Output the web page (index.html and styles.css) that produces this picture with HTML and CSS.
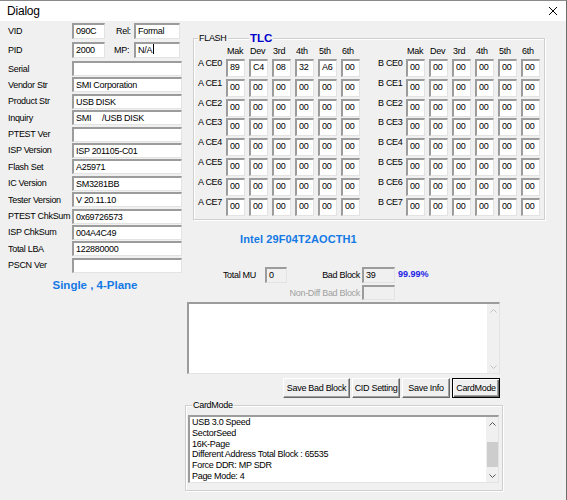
FILE: index.html
```html
<!DOCTYPE html>
<html>
<head>
<meta charset="utf-8">
<title>Dialog</title>
<link rel="stylesheet" href="styles.css">
</head>
<body>
<div class="window">
  <div class="titlebar">
    <span class="title">Dialog</span>
    <svg class="close" width="10" height="10" viewBox="0 0 10 10"><path d="M1 1L9 9M9 1L1 9" stroke="#000" stroke-width="1" fill="none"/></svg>
  </div>
  <div class="client">
    <div class="leftcol">
      <div class="idrow">
        <span class="lbl">VID</span><span class="edit short">090C</span><span class="lbl2 rel">Rel:</span><span class="edit med">Formal</span>
      </div>
      <div class="idrow">
        <span class="lbl">PID</span><span class="edit short">2000</span><span class="lbl2 mp">MP:</span><span class="edit med">N/A<span class="caret"></span></span>
      </div>
      <div class="infogrid">
        <span class="lbl">Serial</span><span class="edit"></span>
        <span class="lbl">Vendor Str</span><span class="edit">SMI Corporation</span>
        <span class="lbl">Product Str</span><span class="edit">USB DISK</span>
        <span class="lbl">Inquiry</span><span class="edit">SMI&nbsp;&nbsp;&nbsp;&nbsp;&nbsp;/USB DISK</span>
        <span class="lbl">PTEST Ver</span><span class="edit"></span>
        <span class="lbl">ISP Version</span><span class="edit">ISP 201105-C01</span>
        <span class="lbl">Flash Set</span><span class="edit">A25971</span>
        <span class="lbl">IC Version</span><span class="edit">SM3281BB</span>
        <span class="lbl">Tester Version</span><span class="edit">V 20.11.10</span>
        <span class="lbl">PTEST ChkSum</span><span class="edit">0x69726573</span>
        <span class="lbl">ISP ChkSum</span><span class="edit">004A4C49</span>
        <span class="lbl">Total LBA</span><span class="edit">122880000</span>
        <span class="lbl">PSCN Ver</span><span class="edit"></span>
      </div>
      <div class="plane">Single , 4-Plane</div>
    </div>

    <div class="rightcol">
      <div class="group flash">
        <span class="legend flashlbl">FLASH</span><span class="legend tlc">TLC</span>
        <div class="halves">
          <div class="cegrid a">
            <span></span><span class="hdr">Mak</span><span class="hdr">Dev</span><span class="hdr">3rd</span><span class="hdr">4th</span><span class="hdr">5th</span><span class="hdr">6th</span>
            <span class="celbl">A CE0</span><span class="cell">89</span><span class="cell">C4</span><span class="cell">08</span><span class="cell">32</span><span class="cell">A6</span><span class="cell">00</span>
            <span class="celbl">A CE1</span><span class="cell">00</span><span class="cell">00</span><span class="cell">00</span><span class="cell">00</span><span class="cell">00</span><span class="cell">00</span>
            <span class="celbl">A CE2</span><span class="cell">00</span><span class="cell">00</span><span class="cell">00</span><span class="cell">00</span><span class="cell">00</span><span class="cell">00</span>
            <span class="celbl">A CE3</span><span class="cell">00</span><span class="cell">00</span><span class="cell">00</span><span class="cell">00</span><span class="cell">00</span><span class="cell">00</span>
            <span class="celbl">A CE4</span><span class="cell">00</span><span class="cell">00</span><span class="cell">00</span><span class="cell">00</span><span class="cell">00</span><span class="cell">00</span>
            <span class="celbl">A CE5</span><span class="cell">00</span><span class="cell">00</span><span class="cell">00</span><span class="cell">00</span><span class="cell">00</span><span class="cell">00</span>
            <span class="celbl">A CE6</span><span class="cell">00</span><span class="cell">00</span><span class="cell">00</span><span class="cell">00</span><span class="cell">00</span><span class="cell">00</span>
            <span class="celbl">A CE7</span><span class="cell">00</span><span class="cell">00</span><span class="cell">00</span><span class="cell">00</span><span class="cell">00</span><span class="cell">00</span>
          </div>
          <div class="cegrid b">
            <span></span><span class="hdr">Mak</span><span class="hdr">Dev</span><span class="hdr">3rd</span><span class="hdr">4th</span><span class="hdr">5th</span><span class="hdr">6th</span>
            <span class="celbl">B CE0</span><span class="cell">00</span><span class="cell">00</span><span class="cell">00</span><span class="cell">00</span><span class="cell">00</span><span class="cell">00</span>
            <span class="celbl">B CE1</span><span class="cell">00</span><span class="cell">00</span><span class="cell">00</span><span class="cell">00</span><span class="cell">00</span><span class="cell">00</span>
            <span class="celbl">B CE2</span><span class="cell">00</span><span class="cell">00</span><span class="cell">00</span><span class="cell">00</span><span class="cell">00</span><span class="cell">00</span>
            <span class="celbl">B CE3</span><span class="cell">00</span><span class="cell">00</span><span class="cell">00</span><span class="cell">00</span><span class="cell">00</span><span class="cell">00</span>
            <span class="celbl">B CE4</span><span class="cell">00</span><span class="cell">00</span><span class="cell">00</span><span class="cell">00</span><span class="cell">00</span><span class="cell">00</span>
            <span class="celbl">B CE5</span><span class="cell">00</span><span class="cell">00</span><span class="cell">00</span><span class="cell">00</span><span class="cell">00</span><span class="cell">00</span>
            <span class="celbl">B CE6</span><span class="cell">00</span><span class="cell">00</span><span class="cell">00</span><span class="cell">00</span><span class="cell">00</span><span class="cell">00</span>
            <span class="celbl">B CE7</span><span class="cell">00</span><span class="cell">00</span><span class="cell">00</span><span class="cell">00</span><span class="cell">00</span><span class="cell">00</span>
          </div>
        </div>
      </div>

      <div class="intel">Intel 29F04T2AOCTH1</div>

      <div class="blkgrid">
        <span class="rlbl first">Total MU</span><span class="edit ro">0</span><span class="rlbl">Bad Block</span><span class="edit ro">39</span><span class="pct">99.99%</span>
        <span></span><span></span><span class="rlbl dis">Non-Diff Bad Block</span><span class="edit ro"></span><span></span>
      </div>

      <div class="memo">
        <div class="memotext"></div>
        <div class="vscroll disabled">
          <div class="arrow"><svg width="7" height="4" viewBox="0 0 7 4"><path d="M0.5 3.5L3.5 0.5L6.5 3.5" fill="none" stroke="#c2c2c2"/></svg></div>
          <div class="track"></div>
          <div class="arrow"><svg width="7" height="4" viewBox="0 0 7 4"><path d="M0.5 0.5L3.5 3.5L6.5 0.5" fill="none" stroke="#c2c2c2"/></svg></div>
        </div>
      </div>

      <div class="buttons">
        <span class="btn w67">Save Bad Block</span>
        <span class="btn">CID Setting</span>
        <span class="btn">Save Info</span>
        <span class="btn default">CardMode</span>
      </div>

      <div class="group cardmode">
        <span class="legend cmlbl">CardMode</span>
        <div class="list">
          <div class="listtext">
            <div>USB 3.0 Speed</div>
            <div>SectorSeed</div>
            <div>16K-Page</div>
            <div>Different Address Total Block : 65535</div>
            <div>Force DDR: MP SDR</div>
            <div>Page Mode: 4</div>
          </div>
          <div class="vscroll">
            <div class="arrow"><svg width="7" height="4" viewBox="0 0 7 4"><path d="M0.5 3.5L3.5 0.5L6.5 3.5" fill="none" stroke="#555"/></svg></div>
            <div class="gap12"></div>
            <div class="thumb"></div>
            <div class="track"></div>
            <div class="arrow"><svg width="7" height="4" viewBox="0 0 7 4"><path d="M0.5 0.5L3.5 3.5L6.5 0.5" fill="none" stroke="#555"/></svg></div>
          </div>
        </div>
      </div>
    </div>
  </div>
</div>
</body>
</html>
```

FILE: styles.css
```css
* { box-sizing: border-box; }
html, body { margin: 0; padding: 0; }
body {
  width: 567px;
  height: 500px;
  overflow: hidden;
  background: #f0f0f0;
  font-family: "Liberation Sans", Arial, sans-serif;
  font-size: 9px;
  letter-spacing: -0.3px;
  color: #000;
}
.window {
  width: 567px;
  height: 500px;
  border-top: 1px solid #8a8a8a;
  border-right: 1px solid #6e6e6e;
  background: #f0f0f0;
}
.titlebar {
  height: 20px;
  background: #fff;
  display: flex;
  align-items: center;
  justify-content: space-between;
  padding: 0 8px 0 7px;
}
.title { font-size: 12px; letter-spacing: -0.2px; }
.close { display: block; margin-top: 0; }

.client { display: flex; padding-left: 8px; }

/* left column */
.leftcol { width: 174px; padding-top: 2px; }
.idrow { display: flex; align-items: center; height: 16px; margin-bottom: 3px; }
.idrow .lbl { width: 64px; }
.lbl { display: flex; align-items: center; white-space: nowrap; }
.lbl2 { width: 29px; white-space: nowrap; }
.lbl2.rel { padding-left: 11px; }
.lbl2.mp { padding-left: 9px; }
.edit {
  display: block;
  height: 100%;
  background: #fff;
  border-style: solid;
  border-width: 2px 1px 1px 2px;
  border-color: #9c9c9c #e3e3e3 #e3e3e3 #9c9c9c;
  padding-left: 2px;
  line-height: 12px;
  white-space: nowrap;
  overflow: hidden;
}
.edit.short { width: 33px; }
.edit.med { width: 46px; }
.caret {
  display: inline-block;
  width: 1px;
  height: 10px;
  background: #000;
  vertical-align: -1px;
  margin-left: 1px;
}
.infogrid {
  display: grid;
  grid-template-columns: 64px 110px;
  grid-auto-rows: 15px;
  row-gap: 1.4px;
  margin-top: 2.5px;
}
.plane {
  margin-top: 5px;
  text-align: center;
  font-weight: bold;
  font-size: 11.5px;
  line-height: 14px;
  letter-spacing: 0;
  color: #1479e4;
}

/* right column */
.rightcol {
  margin-left: 3px;
  display: flex;
  flex-direction: column;
  align-items: flex-start;
}
.group {
  position: relative;
  border: 1px solid #cfcfcf;
  box-shadow: inset 1px 1px 0 #fff, 1px 1px 0 #fff;
}
.legend {
  position: absolute;
  background: #f0f0f0;
  padding: 0 1px;
  line-height: 11px;
  white-space: nowrap;
}
.flash {
  margin-left: 8px;
  margin-top: 17px;
  width: 352px;
  height: 182px;
  padding: 7px 0 0 3px;
}
.flashlbl { left: 4px; top: -6px; }
.tlc {
  left: 55px;
  top: -8px;
  line-height: 14px;
  font-size: 11.5px;
  font-weight: bold;
  letter-spacing: 0;
  color: #0000cc;
}
.halves { display: flex; column-gap: 18px; }
.cegrid {
  display: grid;
  column-gap: 4px;
  row-gap: 1.86px;
  grid-template-rows: 11px;
  grid-auto-rows: 18px;
}
.cegrid.a { grid-template-columns: 25px repeat(6, 19px); }
.cegrid.b { grid-template-columns: 24px repeat(6, 19px); }
.hdr { line-height: 11px; padding-left: 1px; white-space: nowrap; }
.celbl { text-align: right; line-height: 9px; white-space: nowrap; }
.cell {
  background: #fff;
  border-style: solid;
  border-width: 2px 1px 1px 2px;
  border-color: #9c9c9c #e3e3e3 #e3e3e3 #9c9c9c;
  padding-left: 2px;
  line-height: 12px;
}

.intel {
  margin-top: 12px;
  margin-left: 55px;
  font-weight: bold;
  font-size: 11px;
  line-height: 14px;
  letter-spacing: 0.1px;
  color: #1479e4;
}
.blkgrid {
  margin-top: 21px;
  display: grid;
  grid-template-columns: 80px 22px 75px 33px auto;
  grid-template-rows: 16px 15px;
  row-gap: 2px;
}
.rlbl {
  display: flex;
  align-items: center;
  justify-content: flex-end;
  padding-right: 2px;
  white-space: nowrap;
}
.rlbl.first { padding-right: 9px; }
.rlbl.dis { color: #a0a0a0; }
.edit.ro { background: #f0f0f0; }
.pct {
  display: flex;
  align-items: center;
  margin-left: 3px;
  margin-top: -2px;
  font-weight: bold;
  font-size: 9px;
  letter-spacing: 0;
  color: #2323e6;
}

.memo {
  margin-top: 2px;
  margin-left: 2px;
  width: 313px;
  height: 72px;
  display: flex;
  background: #fff;
  border-style: solid;
  border-width: 2px 1px 1px 2px;
  border-color: #9c9c9c #e3e3e3 #e3e3e3 #9c9c9c;
}
.memotext { flex: 1; }
.vscroll {
  width: 12px;
  display: flex;
  flex-direction: column;
  background: #f0f0f0;
}
.arrow {
  height: 13px;
  display: flex;
  align-items: center;
  justify-content: center;
}
.arrow svg { display: block; }
.track { flex: 1; }
.gap12 { height: 12px; }
.thumb { height: 25px; background: #cdcdcd; margin: 0 0 0 1px; }

.buttons {
  margin-top: 4px;
  margin-left: 98px;
  display: flex;
  column-gap: 2px;
  height: 20px;
}
.btn {
  width: 48px;
  display: flex;
  align-items: center;
  justify-content: center;
  white-space: nowrap;
  background: #f0f0f0;
  border: 1px solid;
  border-color: #fff #696969 #696969 #fff;
  box-shadow: inset -1px -1px 0 #a0a0a0;
}
.btn.w67 { width: 67px; }
.btn.default {
  border: 1px solid #000;
  box-shadow: inset 1px 1px 0 #fff, inset -1px -1px 0 #696969, inset -2px -2px 0 #a0a0a0;
}

.cardmode {
  margin-top: 7px;
  width: 318px;
  height: 86px;
  padding: 9px 0 0 2px;
}
.cmlbl { left: 6px; top: -6px; }
.list {
  width: 311px;
  height: 68px;
  display: flex;
  background: #fff;
  border-style: solid;
  border-width: 2px 1px 1px 2px;
  border-color: #9c9c9c #e3e3e3 #e3e3e3 #9c9c9c;
}
.listtext {
  flex: 1;
  padding-left: 2px;
  line-height: 10.8px;
  white-space: nowrap;
}
```
